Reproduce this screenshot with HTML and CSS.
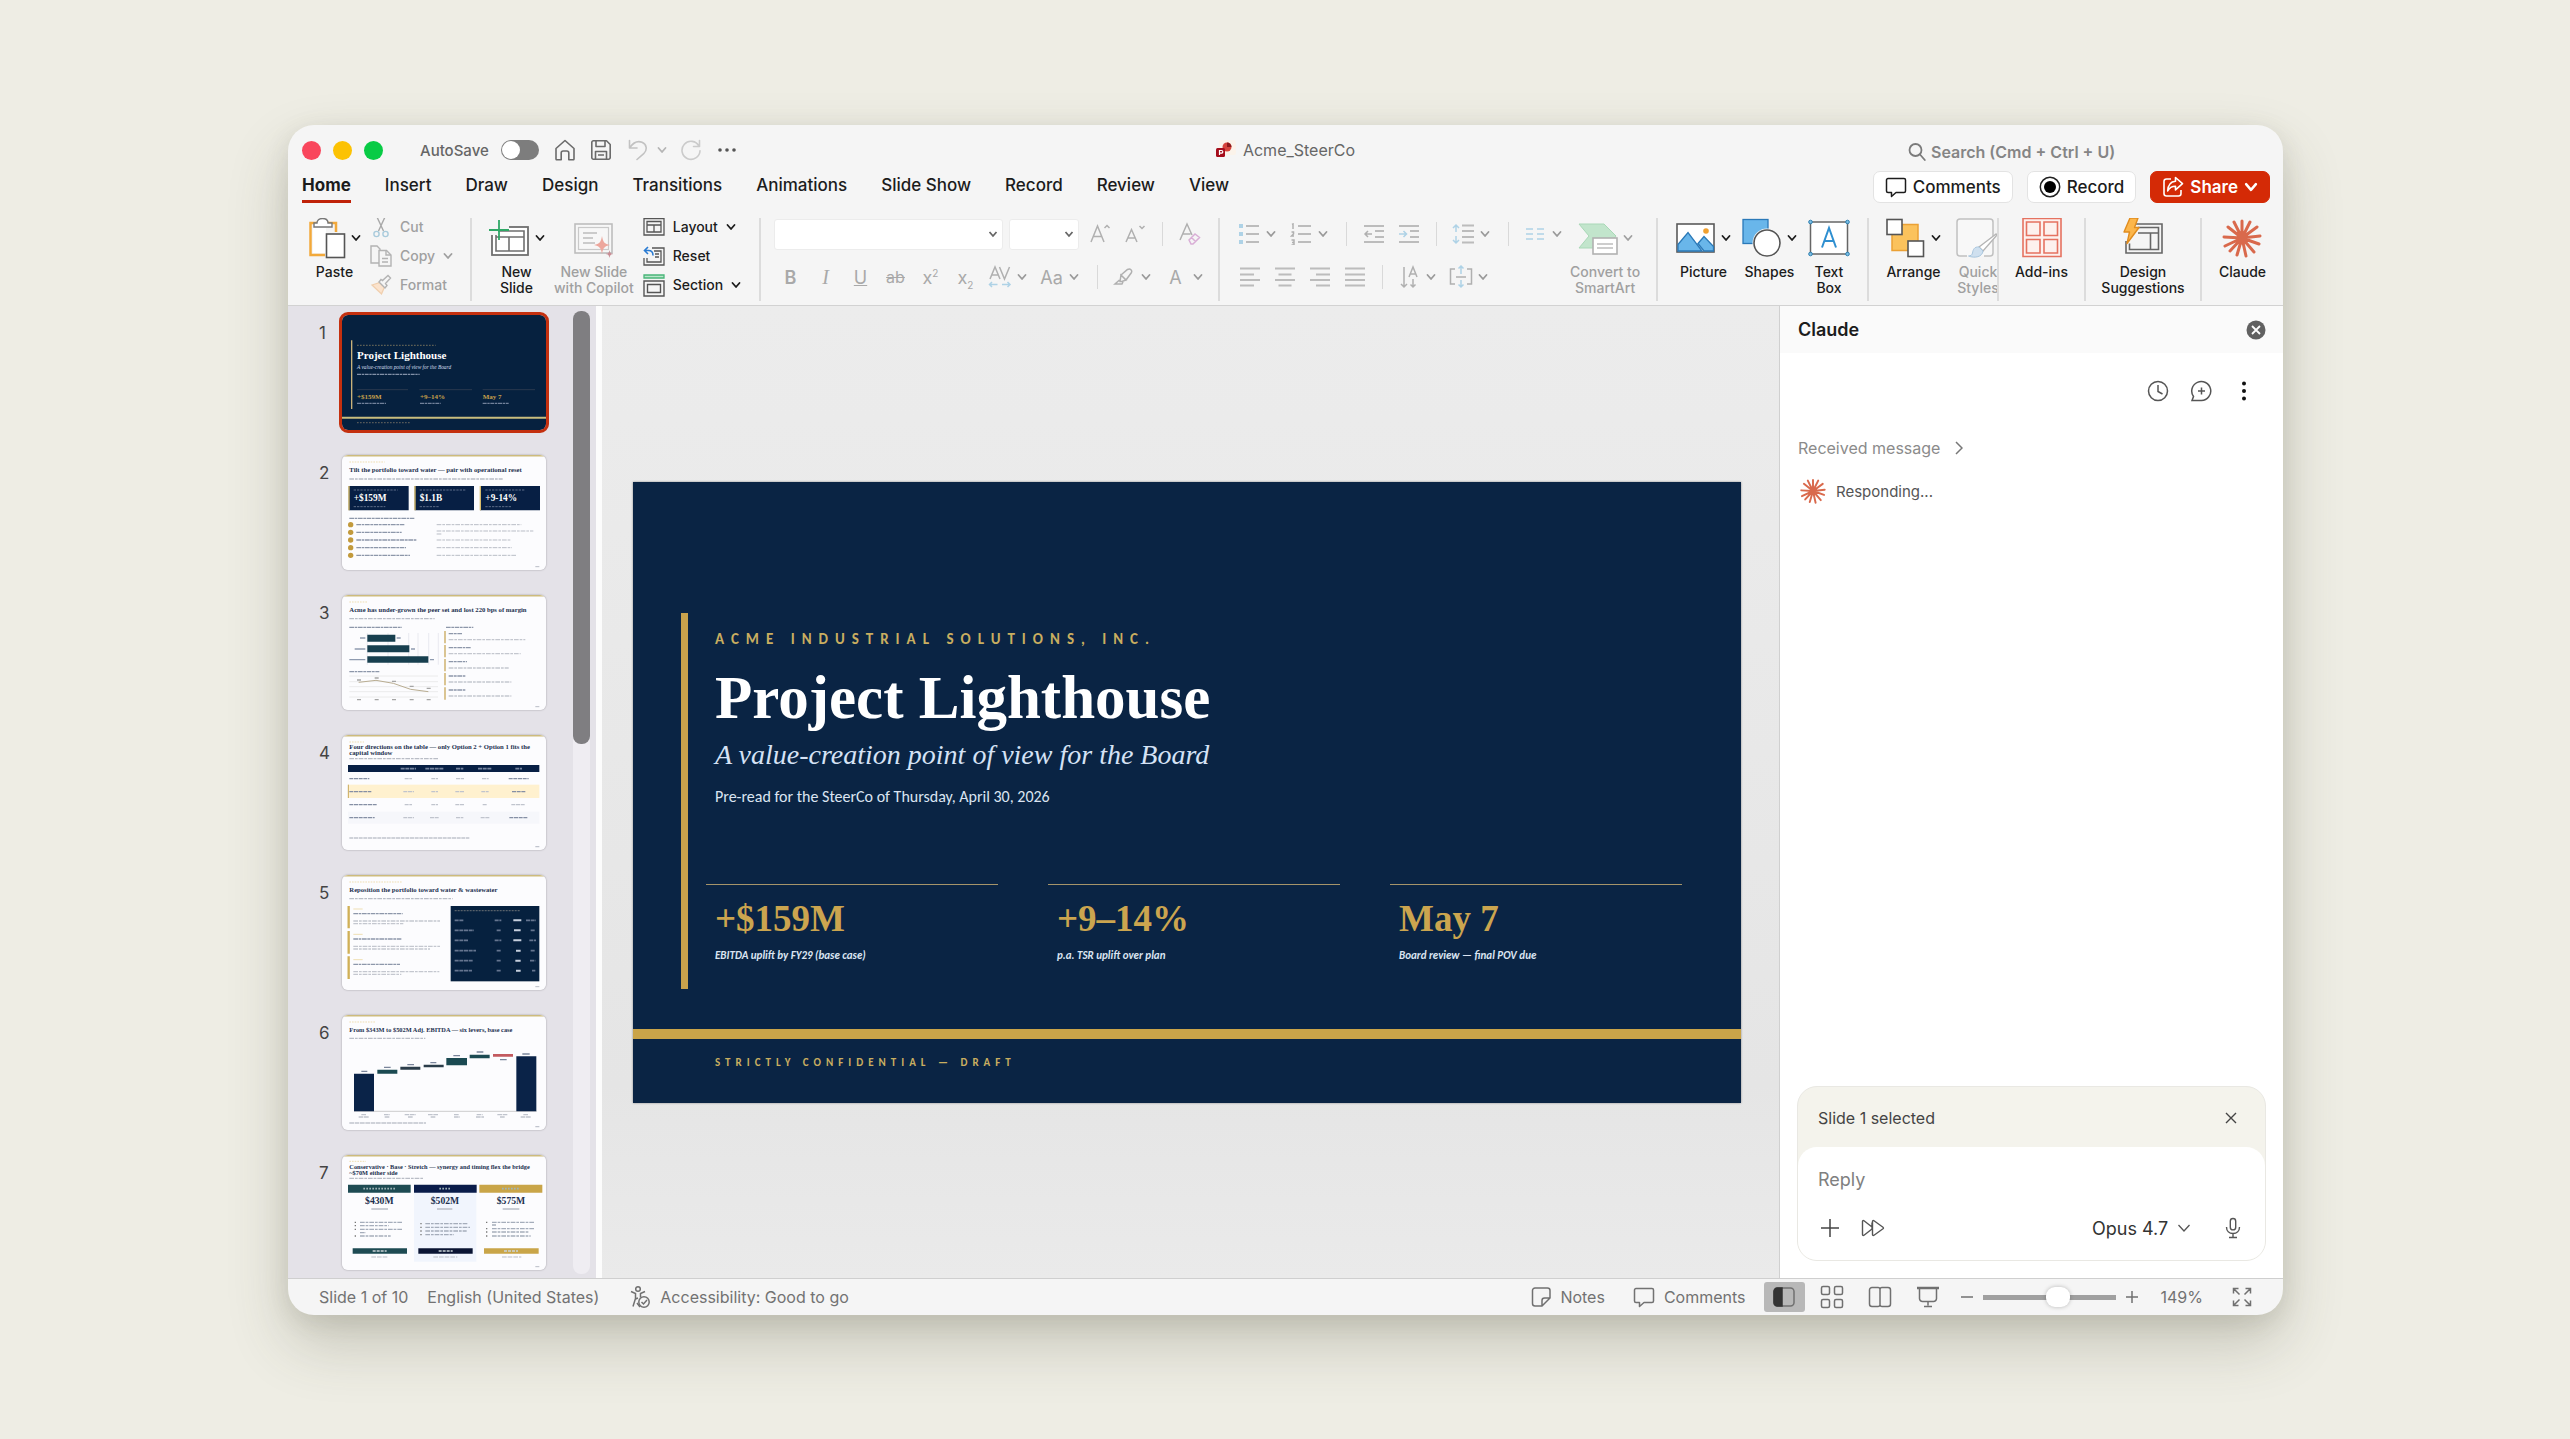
FILE: index.html
```html
<!DOCTYPE html>
<html lang="en">

<head>
  <meta charset="UTF-8" />
  <meta name="viewport" content="width=device-width, initial-scale=1" />
  <title>Acme_SteerCo</title>
  <link rel="stylesheet" href="styles.css">
</head>

<body>

  <!-- shared icons -->
  <svg class="sprite" aria-hidden="true">
    <symbol id="chev" viewBox="0 0 10 10"><path d="M1.500 3l3.500 4 3.500-4" fill="none" stroke="currentColor" stroke-width="1.800" stroke-linecap="round" stroke-linejoin="round" /></symbol>
    <symbol id="bubble" viewBox="0 0 22 22"><path d="M3 2.500h16a1.500 1.500 0 0 1 1.500 1.500v11a1.500 1.500 0 0 1-1.500 1.500H11l-4.500 4v-4H3A1.500 1.500 0 0 1 1.500 15V4A1.500 1.500 0 0 1 3 2.500z" fill="none" stroke="currentColor" stroke-width="1.500" stroke-linejoin="round" /></symbol>
    <symbol id="spark" viewBox="0 0 40 40">
      <g stroke="#d9694c" stroke-width="3" stroke-linecap="round">
        <path d="M20 20L20 3M20 20L28 4M20 20L35 9M20 20L38 18M20 20L37 26M20 20L32 34M20 20L24 38M20 20L15 37M20 20L8 33M20 20L3 28M20 20L2 19M20 20L6 9M20 20L12 4" />
      </g>
    </symbol>
  </svg>

  <div class="window">

    <header class="titlebar">
      <div class="title-left">
        <div class="lights"><i class="red"></i><i class="yellow"></i><i class="green"></i></div>
        <label class="autosave">AutoSave <input type="checkbox" class="toggle"></label>
        <button class="icon-btn home" aria-label="Home"><svg width="22" height="22" viewBox="0 0 22 22"><path d="M2 9.500L11 1.500l9 8V20a.8.8 0 0 1-.8.8h-4.400V14a2 2 0 0 0-2-2h-3.600a2 2 0 0 0-2 2v6.800H2.800A.8.8 0 0 1 2 20z" fill="none" stroke="#6b6b6b" stroke-width="1.600" stroke-linejoin="round" /></svg></button>
        <button class="icon-btn save" aria-label="Save"><svg width="22" height="22" viewBox="0 0 22 22"><path d="M3.500 1.800h13l3.700 3.700v13a1.700 1.700 0 0 1-1.700 1.700h-15a1.700 1.700 0 0 1-1.700-1.700v-15a1.700 1.700 0 0 1 1.700-1.700zM6 2v5.500h9V2M5.500 20v-7.500h11V20M8 16h6" fill="none" stroke="#6b6b6b" stroke-width="1.600" stroke-linejoin="round" /></svg></button>
        <button class="icon-btn undo" aria-label="Undo"><svg width="20" height="22" viewBox="0 0 20 22"><path d="M1.500 1.500v7.500h7.500M1.800 8.600C5 4 9.500 1.500 14 3.300c5 2.200 5.400 7.500 2 11L9 20.500" fill="none" stroke="#c2c2c2" stroke-width="1.600" stroke-linecap="round" stroke-linejoin="round" /></svg></button>
        <button class="icon-btn undo-more" aria-label="Undo history"><svg width="10" height="10"><use href="#chev" /></svg></button>
        <button class="icon-btn redo" aria-label="Redo"><svg width="22" height="22" viewBox="0 0 22 22"><path d="M19.500 1.500v6h-6M19 7.200a9 9 0 1 0 1 4.500" fill="none" stroke="#cbcbcb" stroke-width="1.600" stroke-linecap="round" stroke-linejoin="round" /></svg></button>
        <button class="icon-btn more" aria-label="More"><svg width="20" height="6" viewBox="0 0 20 6"><g fill="#555"><circle cx="3" cy="3" r="1.800" /><circle cx="10" cy="3" r="1.800" /><circle cx="17" cy="3" r="1.800" /></g></svg></button>
      </div>
      <div class="doc-name">
        <svg width="20" height="20" viewBox="0 0 20 20"><rect x="3" y="0" width="17" height="15" rx="2" fill="#fbf3ea" /><circle cx="11" cy="7" r="4.500" fill="#d6443a" /><path d="M11 7V2.500A4.500 4.500 0 0 1 15.500 7z" fill="#8e1a1a" /><rect x="0" y="8" width="9" height="9" rx="1.500" fill="#a50d1c" /><path d="M3.500 15v-4.500h2a1.300 1.300 0 0 1 0 2.600h-2" fill="none" stroke="#fff" stroke-width="1.200" /></svg>
        <span>Acme_SteerCo</span>
      </div>
      <label class="search">
        <svg width="18" height="20" viewBox="0 0 18 20"><circle cx="7.500" cy="8" r="6" fill="none" stroke="#7b7b7b" stroke-width="1.800" /><path d="M12 12.500l4.800 5.500" stroke="#7b7b7b" stroke-width="1.800" stroke-linecap="round" /></svg>
        <input type="search" placeholder="Search (Cmd + Ctrl + U)" aria-label="Search">
      </label>
    </header>

    <div class="tabrow">
      <nav class="tabs">
        <a href="#" class="active">Home</a>
        <a href="#">Insert</a>
        <a href="#">Draw</a>
        <a href="#">Design</a>
        <a href="#">Transitions</a>
        <a href="#">Animations</a>
        <a href="#">Slide Show</a>
        <a href="#">Record</a>
        <a href="#">Review</a>
        <a href="#">View</a>
      </nav>
      <div class="actions">
        <button class="pill"><svg width="22" height="22"><use href="#bubble" /></svg>Comments</button>
        <button class="pill"><svg width="22" height="22" viewBox="0 0 22 22"><circle cx="11" cy="11" r="9.700" fill="none" stroke="#222" stroke-width="1.500" /><circle cx="11" cy="11" r="6" fill="#000" /></svg>Record</button>
        <button class="pill share"><svg width="22" height="22" viewBox="0 0 22 22"><path d="M9 3H4.500A2.500 2.500 0 0 0 2 5.500v12A2.500 2.500 0 0 0 4.500 20h12a2.500 2.500 0 0 0 2.500-2.500V14M13.500 1.500l7 6.200-7 6.200v-3.600c-4 0-6 1.200-7.800 4.700C6 9 9 5.500 13.500 5.200z" fill="none" stroke="#fff" stroke-width="1.600" stroke-linejoin="round" /></svg>Share<svg class="chev" width="14" height="14"><use href="#chev" /></svg></button>
      </div>
    </div>

    <div class="ribbon">
      <section class="group clipboard">
        <button class="big">
          <span class="pic"><svg width="38" height="42" viewBox="0 0 38 42"><path d="M17 38H2.500V6H28v9" fill="none" stroke="#f2a93b" stroke-width="2.500" /><path d="M6 10V6h3c0-2.500 2-4.500 5.500-4.500S20 3.500 20 6h4v4z" fill="#fff" stroke="#777" stroke-width="1.400" /><rect x="5" y="11" width="13" height="25" fill="#fff" /><rect x="18.500" y="17" width="18" height="23.500" fill="#fff" stroke="#555" stroke-width="1.600" /></svg><svg class="chev"><use href="#chev" /></svg></span>
          <span>Paste</span>
        </button>
        <div class="stack off">
          <button><svg width="22" height="22" viewBox="0 0 22 22"><g fill="none" stroke-width="1.400"><path d="M7 1l6.500 14M15 1L8.500 15" stroke="#a8a8a8" /><circle cx="6.500" cy="18" r="2.600" stroke="#a9cbdc" /><circle cx="15.500" cy="18" r="2.600" stroke="#a9cbdc" /></g></svg>Cut</button>
          <button><svg width="22" height="22" viewBox="0 0 22 22"><g fill="#f5f5f5" stroke="#b3b3b3" stroke-width="1.400"><path d="M1 1h6l3 3v14H1z" /><path d="M9 5.500h7.500l4.500 4.500v11H9z" /><path d="M16 5.500V10h5M12 13.500h6M12 17h6" fill="none" /></g></svg>Copy<svg class="chev"><use href="#chev" /></svg></button>
          <button><svg width="22" height="22" viewBox="0 0 22 22"><path d="M2 11l8-2.500 4.500 4.500-3 7z" fill="#fbe3cd" stroke="#f0cfae" stroke-width="1.300" /><path d="M9 8l6 6 2-2.500-1.500-2L20.500 4 18 1.500l-5.500 5-1.500-1z" fill="#f5f5f5" stroke="#b3b3b3" stroke-width="1.400" /></svg>Format</button>
        </div>
      </section>

      <section class="group slides">
        <button class="big">
          <span class="pic"><svg width="42" height="40" viewBox="0 0 42 40"><rect x="4" y="9" width="36" height="28" fill="#fff" stroke="#6f6f6f" stroke-width="1.800" /><path d="M8 13h28v20H8zM8 19h28M21 19v14" fill="none" stroke="#6f6f6f" stroke-width="1.600" /><path d="M0 4h10v13H0zM10 4h11v7H10z" fill="#f5f5f5" /><path d="M11 2v20M1 12h20" stroke="#2fa866" stroke-width="1.800" /></svg><svg class="chev"><use href="#chev" /></svg></span>
          <span>New<br>Slide</span>
        </button>
        <button class="big off copilot">
          <span class="pic"><svg width="40" height="40" viewBox="0 0 40 40"><rect x="1" y="6" width="37" height="29" fill="#f7f7f7" stroke="#bdbdbd" stroke-width="1.600" /><rect x="4.500" y="9.500" width="30" height="22" fill="none" stroke="#c9c9c9" stroke-width="1.200" /><path d="M9 15h14M9 20h10M9 25h12" stroke="#bdbdbd" stroke-width="1.400" /><path d="M28 18c1 6 2.500 8 8 9-5.500 1-7 3-8 9-1-6-2.500-8-8-9 5.500-1 7-3 8-9z" fill="#eda79d" /><path d="M35.500 32c.6 3 1.200 3.600 4 4-2.800.4-3.400 1-4 4-.6-3-1.200-3.600-4-4 2.800-.4 3.400-1 4-4z" fill="#c98f96" /></svg></span>
          <span>New Slide<br>with Copilot</span>
        </button>
        <div class="stack">
          <button><svg width="22" height="20" viewBox="0 0 22 20"><path d="M1 1.500h20v16.500H1zM4 4.500h14v10.500H4zM4 8h14M11 8v7" fill="none" stroke="#555" stroke-width="1.300" /></svg>Layout<svg class="chev"><use href="#chev" /></svg></button>
          <button><svg width="22" height="20" viewBox="0 0 22 20"><path d="M9 2h12v17H1v-7M11 5h7v11H4v-4M12 8h4M12 11h4" fill="none" stroke="#555" stroke-width="1.300" /><path d="M5 1L1.500 4.500 5 8M2 4.500h3.500c3 0 4.500 2 4.500 5" fill="none" stroke="#2b7cd3" stroke-width="1.600" /></svg>Reset</button>
          <button><svg width="22" height="24" viewBox="0 0 22 24"><path d="M1 2h20v3H1z" fill="#b9e6cb" stroke="#48b578" stroke-width="1.300" /><path d="M1 8h20v15H1zM4.500 11.500h13v8h-13z" fill="none" stroke="#555" stroke-width="1.400" /></svg>Section<svg class="chev"><use href="#chev" /></svg></button>
        </div>
      </section>

      <section class="group rows font">
        <div class="row">
          <select class="combo face" aria-label="Font"><option></option></select>
          <select class="combo size" aria-label="Font size"><option></option></select>
          <button class="tool" aria-label="Grow font"><svg width="22" height="22" viewBox="0 0 22 22"><path d="M2 19L8.500 3 15 19M4.500 13.500h8M15.500 5L18 2.500 20.500 5" /></svg></button>
          <button class="tool" aria-label="Shrink font"><svg width="22" height="22" viewBox="0 0 22 22"><path d="M2 19L7.500 6.500 13 19M4 15h7M15.500 3L18 5.500 20.500 3" /></svg></button>
          <i class="sep"></i>
          <button class="tool" aria-label="Clear formatting"><svg width="24" height="24" viewBox="0 0 24 24"><path d="M2 18L9 2l5 11M4.500 12h8" /><path class="pink" d="M11 18l6-6 4.500 3.500-6.500 6.500h-2zM13.500 15.500l4 4" /></svg></button>
        </div>
        <div class="row">
          <button class="tool"><b>B</b></button>
          <button class="tool"><em>I</em></button>
          <button class="tool"><u>U</u></button>
          <button class="tool"><s>ab</s></button>
          <button class="tool"><span>x<sup>2</sup></span></button>
          <button class="tool"><span>x<sub>2</sub></span></button>
          <button class="tool dd" aria-label="Character spacing"><svg width="24" height="24" viewBox="0 0 24 24"><path d="M2 14L7 2l5 12M4 10h6M11.500 2l5 12 5-12" /><path class="blue" d="M1.500 19.500h8M4 17l-2.500 2.500L4 22M22 19.500h-8M19.500 17l2.500 2.500-2.500 2.500" /></svg><svg class="chev"><use href="#chev" /></svg></button>
          <button class="tool dd"><span>Aa</span><svg class="chev"><use href="#chev" /></svg></button>
          <i class="sep"></i>
          <button class="tool dd" aria-label="Highlight"><svg width="22" height="22" viewBox="0 0 22 22"><path d="M8 9L14.500 3.500c3-1.500 5 1 4 3L13 14zM8 9l5 5-4 1.500H7zM6.500 14L2 18h7l1-2" /></svg><svg class="chev"><use href="#chev" /></svg></button>
          <button class="tool dd"><span>A</span><svg class="chev"><use href="#chev" /></svg></button>
        </div>
      </section>

      <section class="group paragraph">
        <div class="rows">
          <div class="row">
            <button class="tool dd" aria-label="Bullets"><svg width="22" height="22" viewBox="0 0 22 22"><path class="gray" d="M8 3h13M8 11h13M8 19h13" /><path class="blue dots" d="M1 3h4M1 11h4M1 19h4" /></svg><svg class="chev"><use href="#chev" /></svg></button>
            <button class="tool dd" aria-label="Numbering"><svg width="22" height="22" viewBox="0 0 22 22"><path class="gray" d="M8 3h13M8 11h13M8 19h13" /><path d="M2 1.500l1-.5v5M1.500 9h2v2l-2 2h2.500M1.500 17h2.500v5H1.500M2 19.500h2" /></svg><svg class="chev"><use href="#chev" /></svg></button>
            <i class="sep"></i>
            <button class="tool" aria-label="Decrease indent"><svg width="22" height="22" viewBox="0 0 22 22"><path class="gray" d="M1 3h20M12 8h9M12 14h9M1 19h20" /><path d="M9 11H2M5 8l-3 3 3 3" /></svg></button>
            <button class="tool" aria-label="Increase indent"><svg width="22" height="22" viewBox="0 0 22 22"><path class="gray" d="M1 3h20M12 8h9M12 14h9M1 19h20" /><path class="blue" d="M1 11h7M5.500 8l3 3-3 3" /></svg></button>
            <i class="sep"></i>
            <button class="tool dd" aria-label="Line spacing"><svg width="24" height="22" viewBox="0 0 24 22"><path class="gray" d="M11 2.500h12M11 8h12M11 14h12M11 19.500h12" /><path class="blue" d="M5 9V2M2 5l3-3 3 3M5 13v7M2 17l3 3 3-3" /></svg><svg class="chev"><use href="#chev" /></svg></button>
            <i class="sep"></i>
            <button class="tool dd" aria-label="Columns"><svg width="20" height="22" viewBox="0 0 20 22"><path class="blue" d="M1 6h7M1 11h7M1 16h7M12 6h7M12 11h7M12 16h7" /></svg><svg class="chev"><use href="#chev" /></svg></button>
          </div>
          <div class="row">
            <button class="tool" aria-label="Align left"><svg width="22" height="22" viewBox="0 0 22 22"><path class="gray" d="M1 2.500h20M1 8.500h14M1 14h20M1 19.500h14" /></svg></button>
            <button class="tool" aria-label="Center"><svg width="22" height="22" viewBox="0 0 22 22"><path class="gray" d="M1 2.500h20M4.500 8.500h13M1 14h20M4.500 19.500h13" /></svg></button>
            <button class="tool" aria-label="Align right"><svg width="22" height="22" viewBox="0 0 22 22"><path class="gray" d="M1 2.500h20M7 8.500h14M1 14h20M7 19.500h14" /></svg></button>
            <button class="tool" aria-label="Justify"><svg width="22" height="22" viewBox="0 0 22 22"><path class="gray" d="M1 2.500h20M1 8.500h20M1 14h20M1 19.500h20" /></svg></button>
            <i class="sep"></i>
            <button class="tool dd" aria-label="Text direction"><svg width="20" height="24" viewBox="0 0 20 24"><path d="M5 2v20M2 19l3 3 3-3M10 12l4-10 4 10M11.500 9h5M14 14v8M11.500 19.500L14 22l2.500-2.500" /></svg><svg class="chev"><use href="#chev" /></svg></button>
            <button class="tool dd" aria-label="Align text"><svg width="24" height="24" viewBox="0 0 24 24"><path d="M6 4H1.500v15H6M18 4h4.500v15H18M7 12h10" /><path class="blue" d="M12 9V1M9.500 3.500L12 1l2.500 2.500M12 15v7M9.500 19.500L12 22l2.500-2.500" /></svg><svg class="chev"><use href="#chev" /></svg></button>
          </div>
        </div>
        <button class="big off smartart">
          <span class="pic"><svg width="40" height="40" viewBox="0 0 40 40"><path d="M1 6h25l12 12-9 12H1l10-12z" fill="#c2e5cc" stroke="#a9d8b7" /><rect x="15" y="20" width="24" height="16" fill="#fff" stroke="#b1b1b1" stroke-width="1.600" /><path d="M19 26h16M19 30h16" stroke="#bdbdbd" stroke-width="1.300" /></svg><svg class="chev"><use href="#chev" /></svg></span>
          <span>Convert to<br>SmartArt</span>
        </button>
      </section>

      <section class="group insert">
        <button class="big">
          <span class="pic"><svg width="40" height="40" viewBox="0 0 40 40"><rect x="1" y="6" width="37" height="28" fill="#fff" stroke="#5a5a5a" stroke-width="1.600" /><path d="M2 26.500l10-12L26 33H2zM22 25.500l6-7 9.500 10V33H28z" fill="#69b6ea" stroke="#2a79b8" stroke-width="1.300" /><circle cx="30" cy="13" r="2.800" fill="#f0a030" /></svg><svg class="chev"><use href="#chev" /></svg></span>
          <span>Picture</span>
        </button>
        <button class="big">
          <span class="pic"><svg width="40" height="40" viewBox="0 0 40 40"><rect x="1" y="1.500" width="25" height="24" fill="#69b6ea" stroke="#2a79b8" stroke-width="1.300" /><circle cx="25" cy="25" r="14.500" fill="#f5f5f5" /><circle cx="25" cy="25" r="13" fill="#fff" stroke="#555" stroke-width="1.600" /></svg><svg class="chev"><use href="#chev" /></svg></span>
          <span>Shapes</span>
        </button>
        <button class="big">
          <span class="pic"><svg width="42" height="40" viewBox="0 0 42 40"><rect x="2.500" y="4" width="37" height="32" fill="#fff" stroke="#666" stroke-width="1.500" /><path d="M14 29.500L21 10l7 19.500M16.500 23h9" fill="none" stroke="#2f8fd0" stroke-width="2" /><g fill="#7cc0e6" stroke="#2f7fb0"><circle cx="2.500" cy="4" r="1.800" /><circle cx="39.500" cy="4" r="1.800" /><circle cx="2.500" cy="36" r="1.800" /><circle cx="39.500" cy="36" r="1.800" /></g></svg></span>
          <span>Text<br>Box</span>
        </button>
      </section>

      <section class="group arrange">
        <button class="big">
          <span class="pic"><svg width="40" height="40" viewBox="0 0 40 40"><rect x="6" y="6.500" width="26" height="26" fill="#fbc25c" stroke="#eba134" stroke-width="1.500" /><rect x="1" y="1.500" width="15" height="15" fill="#fff" stroke="#555" stroke-width="1.600" /><rect x="22" y="23" width="15.500" height="15.500" fill="#fff" stroke="#555" stroke-width="1.600" /></svg><svg class="chev"><use href="#chev" /></svg></span>
          <span>Arrange</span>
        </button>
        <button class="big off quick">
          <span class="pic"><svg width="46" height="42" viewBox="0 0 46 42"><path d="M12 39H5a3 3 0 0 1-3-3V5a3 3 0 0 1 3-3h30a3 3 0 0 1 3 3v31a3 3 0 0 1-3 3h-6" fill="#f8f8f8" stroke="#c0c0c0" stroke-width="1.500" /><path d="M41 17L24 30l4 4 14-16z" fill="#fff" stroke="#b5b5b5" stroke-width="1.400" /><path d="M24 30c-5-.500-6 3-6.500 6-.3 2-2 3-4 3 6 2.500 14 1 14.500-5z" fill="#cfe0ef" stroke="#a9c6de" /></svg></span>
          <span>Quick<br>Styles</span>
        </button>
      </section>

      <section class="group addins">
        <button class="big">
          <span class="pic"><svg width="42" height="42" viewBox="0 0 42 42"><path d="M2 1.500h38v38H2zM5.500 5h13.500v13.500H5.500zM23 5h13.500v13.500H23zM5.500 22.500h13.500V36H5.500zM23 22.500h13.500V36H23z" fill="#fdf1ee" stroke="#e57260" stroke-width="1.600" /></svg></span>
          <span>Add-ins</span>
        </button>
      </section>

      <section class="group designer">
        <button class="big">
          <span class="pic"><svg width="42" height="42" viewBox="0 0 42 42"><path d="M13 7h27v29H4V24M16 10.500h20.500v22H7.500v-6M16 16h20.500M28.500 16v16.500" fill="none" stroke="#666" stroke-width="1.600" /><path d="M8 1h8l-3.500 9.500H17L5 26.500l2.500-11.500H2z" fill="#fcb64b" stroke="#e08c1e" stroke-width="1.400" stroke-linejoin="round" /></svg></span>
          <span>Design<br>Suggestions</span>
        </button>
      </section>

      <section class="group claude">
        <button class="big">
          <span class="pic"><svg width="40" height="40"><use href="#spark" /></svg></span>
          <span>Claude</span>
        </button>
      </section>
    </div>

    <main class="workspace">
      <aside class="thumbs">
        <ol>
          <li>
            <span>1</span>
            <svg class="thumb selected" viewBox="0 0 612 345">
              <rect width="612" height="345" fill="#06213f" />
              <path d="M29 76v206" stroke="#c9b27a" stroke-width="4" />
              <path d="M45 91h236" stroke="#5c5f55" stroke-width="4" stroke-dasharray="5 4" />
              <text x="45" y="133" font-size="33" fill="#fff">Project Lighthouse</text>
              <text x="45" y="161" class="it" font-size="16" fill="#d3dcec">A value-creation point of view for the Board</text>
              <path d="M45 178h188" stroke="#8291a8" stroke-width="4" stroke-dasharray="12 2 7 2" />
              <path d="M45 224h153M232 224h158M422 224h157" stroke="#3c4654" stroke-width="2" />
              <g fill="#c9a24b" font-size="21"><text x="45" y="252">+$159M</text><text x="234" y="252">+9–14%</text><text x="422" y="252">May 7</text></g>
              <path d="M45 265h87M234 265h62M422 265h78" stroke="#71819a" stroke-width="4" stroke-dasharray="12 2 7 2" />
              <path d="M0 308h612" stroke="#c8bd7e" stroke-width="6" />
              <path d="M45 323h162" stroke="#55595a" stroke-width="4" stroke-dasharray="5 4" />
            </svg>
          </li>
          <li>
            <span>2</span>
            <svg class="thumb" viewBox="0 0 612 345">
              <rect width="612" height="345" fill="#fcfcfe" />
              <path d="M0 2h612" stroke="#cdbb7c" stroke-width="5" />
              <path d="M22 21h106" stroke="#efdfb4" stroke-width="3" stroke-dasharray="5 3" />
              <text x="22" y="52" font-size="20">Tilt the portfolio toward water — pair with operational reset</text>
              <path d="M22 72h460" stroke="#b9bdc6" stroke-width="4" stroke-dasharray="14 3 8 3" />
              <path d="M20 93h180v73H20zM218 93h178v73H218zM414 93h180v73H414z" fill="#071f44" />
              <path d="M21 93v73M219 93v73M415 93v73" stroke="#d9bd6a" stroke-width="4" />
              <path d="M35 105h132M233 105h140M430 105h120M35 155h95M233 155h60M430 155h80" stroke="#5c6c88" stroke-width="3" stroke-dasharray="7 3" />
              <g fill="#fff" font-size="28"><text x="35" y="139">+$159M</text><text x="233" y="139">$1.1B</text><text x="430" y="139">+9-14%</text></g>
              <path d="M22 190h195" stroke="#8d97aa" stroke-width="4" stroke-dasharray="14 2 8 2" />
              <g fill="#c29a3c"><circle cx="26" cy="209" r="8" /><circle cx="26" cy="232" r="8" /><circle cx="26" cy="255" r="8" /><circle cx="26" cy="278" r="8" /><circle cx="26" cy="301" r="8" /></g>
              <path d="M43 209h144M43 232h136M43 255h180M43 278h149M43 301h161" stroke="#8d97aa" stroke-width="4" stroke-dasharray="14 2 8 2" />
              <path d="M284 209h254M284 228h290M284 237h14M284 255h221M284 278h226M284 301h240" stroke="#b9bdc6" stroke-width="3" stroke-dasharray="14 3 8 3" />
              <path d="M580 335h12" stroke="#b9bdc6" stroke-width="3" />
            </svg>
          </li>
          <li>
            <span>3</span>
            <svg class="thumb" viewBox="0 0 612 345">
              <rect width="612" height="345" fill="#fcfcfe" />
              <path d="M0 2h612" stroke="#cdbb7c" stroke-width="5" />
              <path d="M22 21h56" stroke="#efdfb4" stroke-width="3" stroke-dasharray="5 3" />
              <text x="22" y="52" font-size="20">Acme has under-grown the peer set and lost 220 bps of margin</text>
              <path d="M22 71h256" stroke="#b9bdc6" stroke-width="4" stroke-dasharray="14 3 8 3" />
              <path d="M22 97h158M312 97h82M22 230h90" stroke="#8d97aa" stroke-width="4" stroke-dasharray="14 2 8 2" />
              <path d="M76 114v95M138 114v95M200 114v95M228 114v95M260 114v95M289 114v95" stroke="#dfe1ea" stroke-width="2" />
              <path d="M76 119h84v21H76zM76 151h126v21H76zM76 184h183v19H76z" fill="#173f4f" />
              <path d="M54 129h16M38 162h32M22 194h48M164 129h12M207 162h12M264 194h12" stroke="#8f9bb0" stroke-width="4" />
              <path d="M22 243h266M22 260h266M22 275h266M22 290h266M22 306h266" stroke="#e2e2e2" stroke-width="2" />
              <path d="M50 262l52-6 52 9 52 18 53 7" fill="none" stroke="#b9ad92" stroke-width="3" />
              <path d="M45 255h12M98 249h12M150 259h12M203 274h12M254 280h12M45 314h12M98 314h12M150 314h12M203 314h12M254 314h12" stroke="#a5a5a5" stroke-width="4" />
              <path d="M309 108v37M309 150v37M309 192v37M309 234v37M309 277v37" stroke="#c9a95c" stroke-width="4" />
              <path d="M320 116h40M320 158h66M320 200h55M320 243h50M320 285h52" stroke="#8d97aa" stroke-width="4" stroke-dasharray="14 2 8 2" />
              <path d="M320 134h230M320 176h216M320 219h180M320 261h188M320 303h188" stroke="#c4c7cf" stroke-width="4" stroke-dasharray="14 3 8 3" />
              <path d="M580 335h12" stroke="#b9bdc6" stroke-width="3" />
            </svg>
          </li>
          <li>
            <span>4</span>
            <svg class="thumb" viewBox="0 0 612 345">
              <rect width="612" height="345" fill="#fcfcfe" />
              <path d="M0 2h612" stroke="#cdbb7c" stroke-width="5" />
              <path d="M22 21h44" stroke="#efdfb4" stroke-width="3" stroke-dasharray="5 3" />
              <text x="22" y="42" font-size="20">Four directions on the table — only Option 2 + Option 1 fits the</text>
              <text x="22" y="61" font-size="20">capital window</text>
              <path d="M22 71h268" stroke="#b9bdc6" stroke-width="4" stroke-dasharray="14 3 8 3" />
              <rect x="18" y="90" width="574" height="21" fill="#071f44" />
              <path d="M176 101h46M250 101h54M342 101h22M408 101h42M520 101h20" stroke="#7685a0" stroke-width="5" stroke-dasharray="12 2" />
              <rect x="18" y="149" width="574" height="40" fill="#fff1cf" /><path d="M19 149v40" stroke="#c9a95c" stroke-width="3" />
              <rect x="18" y="230" width="574" height="36" fill="#f6f7fb" />
              <path d="M22 131h60M22 170h66M22 209h82M22 248h76M500 131h60M510 170h40M502 248h56" stroke="#858fa4" stroke-width="4" stroke-dasharray="12 2" />
              <path d="M188 131h22M268 131h20M342 131h24M420 131h20M184 170h32M268 170h20M340 170h28M418 170h22M188 209h22M268 209h20M340 209h26M422 209h12M184 248h32M264 248h26M342 248h22M416 248h26M508 209h42M22 309h360M580 335h12" stroke="#c0c4cd" stroke-width="4" stroke-dasharray="12 2" />
            </svg>
          </li>
          <li>
            <span>5</span>
            <svg class="thumb" viewBox="0 0 612 345">
              <rect width="612" height="345" fill="#fcfcfe" />
              <path d="M0 2h612" stroke="#cdbb7c" stroke-width="5" />
              <path d="M22 21h160" stroke="#efdfb4" stroke-width="3" stroke-dasharray="5 3" />
              <text x="22" y="51" font-size="20">Reposition the portfolio toward water &amp; wastewater</text>
              <path d="M22 71h310" stroke="#b9bdc6" stroke-width="4" stroke-dasharray="14 3 8 3" />
              <path d="M20 93v67M20 168v68M20 244v68" stroke="#d0b057" stroke-width="7" />
              <path d="M34 116h148M34 192h146M34 268h140" stroke="#8d97aa" stroke-width="4" stroke-dasharray="14 2 8 2" />
              <path d="M34 138h260M34 146h150M34 214h260M34 222h230M34 290h258M34 298h144" stroke="#c4c7cf" stroke-width="4" stroke-dasharray="14 3 8 3" />
              <path d="M34 102h28M34 178h28M34 254h28" stroke="#efdfb4" stroke-width="3" />
              <rect x="326" y="93" width="266" height="226" fill="#06213f" />
              <path d="M338 107h195" stroke="#57616a" stroke-width="4" stroke-dasharray="6 3" />
              <path d="M338 136h26M338 166h58M338 196h40M338 227h64M338 257h56M338 287h52M458 136h20M464 166h14M458 196h20M464 227h14M464 257h14M464 287h14M552 136h30M566 166h14M562 196h20M566 227h14M564 257h16M570 287h10" stroke="#65758f" stroke-width="5" stroke-dasharray="12 2" />
              <path d="M514 136h24M516 166h20M514 196h24M522 227h14M520 257h16M522 287h14" stroke="#c6cfdd" stroke-width="6" />
              <path d="M580 335h12" stroke="#b9bdc6" stroke-width="3" />
            </svg>
          </li>
          <li>
            <span>6</span>
            <svg class="thumb" viewBox="0 0 612 345">
              <rect width="612" height="345" fill="#fcfcfe" />
              <path d="M0 2h612" stroke="#cdbb7c" stroke-width="5" />
              <path d="M22 21h80" stroke="#efdfb4" stroke-width="3" stroke-dasharray="5 3" />
              <text x="22" y="51" font-size="19">From $343M to $502M Adj. EBITDA — six levers, base case</text>
              <path d="M22 70h228" stroke="#b9bdc6" stroke-width="4" stroke-dasharray="14 3 8 3" />
              <path d="M36 289h548" stroke="#b5b5b5" stroke-width="2" />
              <path d="M36 176h60v113H36zM523 124h60v165H523z" fill="#0a2348" />
              <path d="M106 164h60v12h-60zM313 129h62v22h-62zM383 119h60v11h-60z" fill="#1b4a52" />
              <path d="M175 155h60v9h-60zM245 149h60v8h-60z" fill="#2b3d4a" />
              <path d="M453 117h60v8h-60z" fill="#c35a5f" />
              <path d="M58 169h18M126 157h20M196 149h20M265 143h18M334 122h20M404 111h20M474 134h20M541 117h22" stroke="#7a859b" stroke-width="4" />
              <path d="M58 299h16M126 299h18M188 299h34M258 299h32M336 299h16M404 299h18M466 299h32M544 299h16M50 306h30M128 306h16M198 306h16M266 306h16M336 306h18M402 306h24M474 306h14M536 306h30M22 324h230M580 335h12" stroke="#c0c4cd" stroke-width="4" stroke-dasharray="14 2" />
            </svg>
          </li>
          <li>
            <span>7</span>
            <svg class="thumb" viewBox="0 0 612 345">
              <rect width="612" height="345" fill="#fcfcfe" />
              <path d="M0 2h612" stroke="#cdbb7c" stroke-width="5" />
              <path d="M22 19h50" stroke="#efdfb4" stroke-width="3" stroke-dasharray="5 3" />
              <text x="22" y="41" font-size="19">Conservative · Base · Stretch — synergy and timing flex the bridge</text>
              <text x="22" y="60" font-size="19">~$70M either side</text>
              <path d="M22 70h224" stroke="#b9bdc6" stroke-width="4" stroke-dasharray="14 3 8 3" />
              <rect x="216" y="112" width="187" height="208" fill="#f1f5fd" />
              <path d="M18 89h188v24H18z" fill="#1e4b53" /><path d="M216 89h188v24H216z" fill="#0a1c4a" /><path d="M412 89h189v24H412z" fill="#c9a548" />
              <path d="M64 101h96M292 101h34M480 101h50" stroke="#9fb3b8" stroke-width="5" stroke-dasharray="5 4" />
              <g font-size="29" text-anchor="middle"><text x="112" y="146">$430M</text><text x="309" y="146">$502M</text><text x="507" y="146">$575M</text></g>
              <path d="M88 162h50M285 162h46M482 162h50" stroke="#b9bdc6" stroke-width="4" />
              <path d="M54 202h128M54 212h86M54 223h128M54 233h18M54 243h92M250 206h128M250 217h134M250 228h124M250 239h86M450 202h126M450 210h12M450 221h128M450 231h110M450 243h116" stroke="#a5adbb" stroke-width="4" stroke-dasharray="14 3 8 3" />
              <path d="M38 202h4M38 212h4M38 223h4M38 243h4M235 206h4M235 217h4M235 228h4M235 239h4M432 202h4M432 221h4M432 231h4M432 243h4" stroke="#777" stroke-width="4" />
              <path d="M32 280h163v16H32z" fill="#1e4b53" /><path d="M229 280h163v16H229z" fill="#0a1433" /><path d="M426 280h164v16H426z" fill="#c9a548" />
              <path d="M92 288h42M290 288h42M486 288h42" stroke="#c9d2d6" stroke-width="5" stroke-dasharray="9 3" />
              <path d="M88 306h50M274 306h72M480 306h58M580 335h12" stroke="#b9bdc6" stroke-width="3" stroke-dasharray="14 3" />
            </svg>
          </li>
        </ol>
        <div class="scroll"><div class="scroll-thumb"></div></div>
      </aside>

      <section class="editor">
        <article class="slide">
          <div class="hero">
            <p class="eyebrow">ACME INDUSTRIAL SOLUTIONS, INC.</p>
            <h1>Project Lighthouse</h1>
            <p class="subtitle">A value-creation point of view for the Board</p>
            <p class="preread">Pre-read for the SteerCo of Thursday, April 30, 2026</p>
            <div class="stats">
              <div><strong>+$159M</strong><em>EBITDA uplift by FY29 (base case)</em></div>
              <div><strong>+9–14%</strong><em>p.a. TSR uplift over plan</em></div>
              <div><strong>May 7</strong><em>Board review — final POV due</em></div>
            </div>
          </div>
          <div class="band"></div>
          <p class="confidential">STRICTLY CONFIDENTIAL — DRAFT</p>
        </article>
      </section>

      <aside class="pane">
        <header>
          <h2>Claude</h2>
          <button class="icon-btn" aria-label="Close pane"><svg width="20" height="20" viewBox="0 0 20 20"><circle cx="10" cy="10" r="9.500" fill="#616161" /><path d="M6 6l8 8M14 6l-8 8" stroke="#fff" stroke-width="1.800" /></svg></button>
        </header>
        <div class="pane-tools">
          <button class="icon-btn" aria-label="History"><svg width="22" height="22" viewBox="0 0 22 22"><circle cx="11" cy="11" r="9.500" /><path d="M11 5v6.500l4.500 2.500" /></svg></button>
          <button class="icon-btn" aria-label="New chat"><svg width="22" height="22" viewBox="0 0 22 22"><path d="M2 20.500l1.500-4A9.500 9.500 0 1 1 11.500 20.500zM11.500 7.500v7M8 11h7" /></svg></button>
          <button class="icon-btn" aria-label="Options"><svg class="solid" width="22" height="22" viewBox="0 0 22 22"><circle cx="11" cy="3.500" r="2" /><circle cx="11" cy="11" r="2" /><circle cx="11" cy="18.500" r="2" /></svg></button>
        </div>
        <button class="received">Received message <svg width="8" height="14" viewBox="0 0 8 14"><path d="M1 1l6 6-6 6" fill="none" stroke="#777" stroke-width="1.500" /></svg></button>
        <p class="responding"><svg width="26" height="26"><use href="#spark" /></svg>Responding...</p>

        <form class="composer">
          <div class="context">Slide 1 selected
            <button type="button" class="icon-btn" aria-label="Remove"><svg width="12" height="12" viewBox="0 0 12 12"><path d="M1 1l10 10M11 1L1 11" stroke="#444" stroke-width="1.400" /></svg></button>
          </div>
          <div class="box">
            <input type="text" placeholder="Reply" aria-label="Reply">
            <div class="box-tools">
              <button type="button" class="icon-btn" aria-label="Attach"><svg width="18" height="18" viewBox="0 0 18 18"><path d="M9 0v18M0 9h18" stroke="#444" stroke-width="1.500" /></svg></button>
              <button type="button" class="icon-btn ff" aria-label="Auto accept"><svg width="24" height="18" viewBox="0 0 24 18"><path d="M1.500 2.500v13c0 .800.800 1.200 1.500.700l8-6.200V3.500M1.500 2.500c0-.800.800-1.200 1.500-.700L11 8M11.500 2.500c0-.800.800-1.200 1.500-.700l9 6.400c.6.500.6 1.100 0 1.600l-9 6.400c-.7.500-1.500.1-1.500-.700z" fill="none" stroke="#555" stroke-width="1.400" stroke-linejoin="round" /></svg></button>
              <span class="model"><select aria-label="Model"><option>Opus 4.7</option></select><svg width="14" height="14" viewBox="0 0 14 14"><path d="M1.500 4L7 10l5.500-6" fill="none" stroke="#555" stroke-width="1.300" /></svg></span>
              <button type="button" class="icon-btn" aria-label="Dictate"><svg width="16" height="22" viewBox="0 0 16 22"><path d="M8 1.500A2.700 2.700 0 0 1 10.700 4.200v6a2.700 2.700 0 0 1-5.400 0v-6A2.700 2.700 0 0 1 8 1.500zM1.500 10c0 4 2.700 6.500 6.500 6.500s6.500-2.500 6.500-6.500M8 16.500V20M4 20.500h8" fill="none" stroke="#555" stroke-width="1.400" /></svg></button>
            </div>
          </div>
        </form>
      </aside>
    </main>

    <footer class="status">
      <span class="count">Slide 1 of 10</span>
      <span>English (United States)</span>
      <button class="a11y"><svg width="22" height="24" viewBox="0 0 22 24"><circle cx="9" cy="4" r="2.300" /><path d="M2 6.500l4.500 2v5L4 21.500M16 6.500l-4.500 2v4M6.500 14l2.500-1M11 22l-3-4" /><circle cx="15" cy="17" r="5.200" /><path d="M12.500 17l2 2 3.500-4" /></svg>Accessibility: Good to go</button>
      <button class="notes"><svg width="20" height="22" viewBox="0 0 20 22"><path d="M4 2h12.500A2.500 2.500 0 0 1 19 4.500V12l-8 8H4a2.500 2.500 0 0 1-2.500-2.500v-13A2.500 2.500 0 0 1 4 2zM11 20v-5.500a2.500 2.500 0 0 1 2.500-2.500H19" /></svg>Notes</button>
      <button class="remarks"><svg width="22" height="22"><use href="#bubble" /></svg>Comments</button>
      <div class="views">
        <button class="on" aria-label="Normal"><svg width="24" height="22" viewBox="0 0 24 22"><rect x="2" y="2" width="20" height="18" rx="3.500" /><path d="M10 2v18H5.500A3.500 3.500 0 0 1 2 16.500v-11A3.500 3.500 0 0 1 5.500 2z" fill="#333" stroke="#333" /></svg></button>
        <button aria-label="Slide sorter"><svg width="24" height="24" viewBox="0 0 24 24"><rect x="1.500" y="1.500" width="8" height="8" rx="1.500" /><rect x="14.500" y="1.500" width="8" height="8" rx="1.500" /><rect x="1.500" y="14.500" width="8" height="8" rx="1.500" /><rect x="14.500" y="14.500" width="8" height="8" rx="1.500" /></svg></button>
        <button aria-label="Reading view"><svg width="24" height="22" viewBox="0 0 24 22"><path d="M12 3.500v16M4 1.500h6a2 2 0 0 1 2 2 2 2 0 0 1 2-2h6a2.500 2.500 0 0 1 2.500 2.500v14a2.500 2.500 0 0 1-2.500 2.500h-6a2 2 0 0 1-2-1.500 2 2 0 0 1-2 1.500H4A2.500 2.500 0 0 1 1.500 18V4A2.500 2.500 0 0 1 4 1.500z" /></svg></button>
        <button aria-label="Slide show"><svg width="24" height="22" viewBox="0 0 24 22"><path d="M3.500 2.500v10a3 3 0 0 0 3 3h11a3 3 0 0 0 3-3v-10M12 15.500v4M8 20.500h8" /><path d="M1 2h22" stroke-width="2.500" /></svg></button>
      </div>
      <div class="zoom">
        <button aria-label="Zoom out"><svg width="12" height="12" viewBox="0 0 12 12"><path d="M0 6h12" /></svg></button>
        <input type="range" min="0" max="100" value="58" aria-label="Zoom">
        <button aria-label="Zoom in"><svg width="12" height="12" viewBox="0 0 12 12"><path d="M0 6h12M6 0v12" /></svg></button>
      </div>
      <span class="percent">149%</span>
      <button aria-label="Fit to window"><svg width="20" height="20" viewBox="0 0 20 20"><path d="M7.500 7.500L1.500 1.500M1.500 6.500v-5h5M12.500 7.500l6-6M13.500 1.500h5v5M7.500 12.500l-6 6M1.500 13.500v5h5M12.500 12.500l6 6M13.500 18.500h5v-5" /></svg></button>
    </footer>

  </div>

</body>

</html>
```
FILE: styles.css
```css
* {
  box-sizing: border-box;
}

body {
  margin: 0;
  min-height: 100vh;
  padding: 125px 287px 124px 288px;
  display: flex;
  background: #eeede4;
  font-family: Inter, "Noto Sans", sans-serif;
  font-size: 16px;
  color: #1c1c1c;
}

button,
input,
select {
  font: inherit;
  color: inherit;
}

button {
  padding: 0;
  border: none;
  background: none;
}

p,
h1,
h2,
ol {
  margin: 0;
  padding: 0;
}

svg {
  display: block;
  flex: none;
}

.sprite {
  position: absolute;
  width: 0;
  height: 0;
}

.chev {
  width: 10px;
  height: 10px;
}

.icon-btn {
  display: flex;
  align-items: center;
}

.window {
  flex: 1;
  min-width: 0;
  display: flex;
  flex-direction: column;
  overflow: hidden;
  border-radius: 26px;
  background: #f5f5f5;
  box-shadow: 0 28px 60px rgba(70, 70, 50, 0.24), 0 6px 24px rgba(70, 70, 50, 0.12);
}

/* title bar */

.titlebar {
  height: 46px;
  padding-top: 4px;
  display: grid;
  grid-template-columns: 1fr auto 1fr;
  align-items: center;
}

.title-left {
  display: flex;
  align-items: center;
  padding-left: 14px;
  color: #666;
}

.lights {
  display: flex;
  gap: 12px;
}

.lights i {
  width: 19px;
  height: 19px;
  border-radius: 50%;
}

.red {
  background: #f9465c;
}

.yellow {
  background: #fcc203;
}

.green {
  background: #08cb45;
}

.autosave {
  display: flex;
  align-items: center;
  gap: 12px;
  margin-left: 37px;
  font-size: 15px;
  font-weight: 500;
}

.toggle {
  appearance: none;
  width: 38px;
  height: 20px;
  margin: 0;
  border-radius: 10px;
  background: #7d7d7d;
}

.toggle::before {
  content: "";
  display: block;
  width: 18px;
  height: 18px;
  margin: 1px;
  border-radius: 50%;
  background: #fff;
}

.home {
  margin-left: 15px;
}

.save {
  margin-left: 14px;
}

.undo {
  margin-left: 16px;
}

.undo-more {
  margin-left: 9px;
  color: #b5b5b5;
}

.redo {
  margin-left: 13px;
}

.more {
  margin-left: 15px;
}

.doc-name {
  display: flex;
  align-items: center;
  gap: 7px;
  color: #666;
}

.search {
  justify-self: end;
  display: flex;
  align-items: center;
  gap: 5px;
  margin: 3px 148px 0 0;
}

.search input {
  width: 204px;
  padding: 0;
  border: none;
  outline: none;
  background: none;
  font-weight: 600;
}

.search input::placeholder {
  color: #858585;
}

/* tabs */

.tabrow {
  height: 32px;
  display: flex;
  justify-content: space-between;
  padding: 0 13px 0 14px;
}

.tabs {
  display: flex;
  gap: 34px;
}

.tabs a {
  color: #1c1c1c;
  font-size: 17px;
  font-weight: 500;
  line-height: 29px;
  text-decoration: none;
}

.tabs .active {
  font-weight: 700;
  border-bottom: 3px solid #c02208;
}

.actions {
  display: flex;
  gap: 14px;
}

.pill {
  display: flex;
  align-items: center;
  gap: 6px;
  padding: 0 11px;
  border: 1px solid #e3e3e3;
  border-radius: 7px;
  background: #fff;
  font-weight: 500;
  font-size: 17px;
}

.share {
  border-color: #d42a06;
  background: #d42a06;
  color: #fff;
  font-weight: 600;
}

.share .chev {
  width: 14px;
  height: 14px;
}

/* ribbon */

.ribbon {
  height: 103px;
  padding: 15px 0 4px;
  display: flex;
  border-bottom: 1px solid #d2d2d2;
  font-size: 14px;
  font-weight: 500;
}

.group {
  display: flex;
  flex: none;
  align-items: flex-start;
  border-right: 2px solid #dcdcdc;
  overflow: hidden;
}

.clipboard {
  width: 184px;
  padding-left: 20px;
  gap: 9px;
}

.slides {
  width: 289px;
  padding-left: 16px;
}

.copilot {
  margin: 0 9px;
}

.font {
  width: 459px;
}

.paragraph {
  width: 438px;
}

.insert {
  width: 211px;
  padding-left: 18px;
  gap: 11px;
}

.arrange {
  width: 130px;
  padding-left: 17px;
  gap: 14px;
}

.addins {
  width: 87px;
  justify-content: center;
}

.designer {
  width: 116px;
  justify-content: center;
}

.claude {
  flex: 1;
  justify-content: center;
  border-right: none;
}

.big {
  display: flex;
  flex: none;
  flex-direction: column;
  align-items: center;
  line-height: 16px;
}

.pic {
  display: flex;
  align-items: center;
  gap: 5px;
  height: 46px;
  margin-top: -3px;
  margin-bottom: 3px;
}

.off {
  color: #a0a0a0;
}

.stack {
  display: flex;
  flex-direction: column;
  margin-top: -6px;
}

.stack button {
  height: 29px;
  display: flex;
  align-items: center;
  gap: 8px;
}

.rows {
  flex: none;
  display: flex;
  flex-direction: column;
  gap: 13px;
  padding: 1px 0 0 12px;
}

.row {
  height: 30px;
  display: flex;
  align-items: center;
}

.combo {
  appearance: none;
  width: 229px;
  height: 31px;
  margin: 0 6px 0 1px;
  border: 1px solid #ececec;
  border-radius: 3px;
  background: #fff url("data:image/svg+xml,%3Csvg xmlns='http://www.w3.org/2000/svg' viewBox='0 0 10 10'%3E%3Cpath d='M1.500 3l3.500 4 3.500-4' fill='none' stroke='%23666' stroke-width='1.800'/%3E%3C/svg%3E") no-repeat right 4px center / 10px;
}

.size {
  width: 70px;
  margin: 0 3px 0 0;
}

.tool {
  width: 35px;
  height: 30px;
  display: flex;
  align-items: center;
  justify-content: center;
  color: #a9a9a9;
  font-size: 18px;
  font-weight: 400;
}

.tool svg {
  fill: none;
  stroke: #b0b0b0;
  stroke-width: 1.5;
}

.tool .chev {
  color: #9a9a9a;
  stroke: none;
}

.tool b {
  font-weight: 600;
}

.tool em {
  font-family: "Liberation Serif", serif;
  font-size: 20px;
}

.tool s {
  font-size: 16px;
}

.tool sup,
.tool sub {
  font-size: 10px;
  line-height: 0;
}

.tool .blue {
  stroke: #aed2e6;
}

.tool .dots {
  stroke-width: 4;
}

.tool .gray {
  stroke: #bcbcbc;
  stroke-width: 2;
}

.tool .pink {
  stroke: #d9aed6;
}

.dd {
  width: 52px;
  display: grid;
  grid-template-columns: 33px 12px;
  justify-content: start;
  justify-items: center;
}

.sep {
  width: 20px;
  height: 24px;
  background: linear-gradient(#d9d9d9, #d9d9d9) no-repeat center / 1px 100%;
}

.smartart {
  margin: 0 16px 0 auto;
}

/* workspace */

.workspace {
  flex: 1;
  min-height: 0;
  display: flex;
}

.thumbs {
  flex: none;
  width: 314px;
  display: flex;
  background: #e4e2e8;
  border-right: 6px solid #fcfcfc;
}

.thumbs ol {
  width: 285px;
  padding: 9px 0 0 31px;
  display: flex;
  flex-direction: column;
  gap: 25px;
  list-style: none;
}

.thumbs li {
  display: flex;
  font-size: 17px;
  line-height: 36px;
  color: #444;
}

.thumbs li span {
  width: 23px;
}

.thumb {
  width: 204px;
  height: 115px;
  border-radius: 6px;
  box-shadow: 0 0 2px rgba(0, 0, 0, 0.35);
  font-family: Georgia, "Liberation Serif", serif;
  font-weight: 700;
  fill: #22304f;
}

.thumb .it {
  font-weight: 400;
  font-style: italic;
}

.selected {
  outline: 3px solid #c4300f;
}

.scroll {
  width: 17px;
  margin: 5px 0 4px;
  border-radius: 8px;
  background: #efedf2;
}

.scroll-thumb {
  height: 45%;
  border-radius: 8px;
  background: #7f7e81;
}

.editor {
  flex: 1;
  min-width: 0;
  display: flex;
  align-items: center;
  padding: 0 38px 0 31px;
  background: linear-gradient(#ececec, #e5e5e5 80%, #eaeaea);
}

.slide {
  flex: 1;
  aspect-ratio: 1108 / 621;
  background: #0a2444;
  color: #fff;
  font-family: Calibri, Lato, sans-serif;
  box-shadow: 0 0 2px rgba(0, 0, 0, 0.4);
}

.hero {
  height: 376px;
  margin: 131px 59px 0 48px;
  padding: 16px 0 0 18px;
  border-left: 7px solid #c9a24c;
}

.hero > h1,
.hero > p {
  margin-left: 9px;
}

.eyebrow {
  color: #c9ae60;
  font-size: 15px;
  font-weight: 700;
  line-height: 20px;
  letter-spacing: 7px;
}

.slide h1 {
  margin-top: 17px;
  font: 700 61px/64px Georgia, "Liberation Serif", serif;
}

.subtitle {
  margin-top: 7px;
  color: #d5e2f5;
  font: italic 28px/36px Georgia, "Liberation Serif", serif;
}

.preread {
  margin-top: 14px;
  color: #dbe4f2;
  font-size: 16px;
  line-height: 20px;
}

.stats {
  display: grid;
  grid-template-columns: repeat(3, 1fr);
  gap: 50px;
  margin-top: 77px;
}

.stats div {
  padding: 14px 0 0 9px;
  border-top: 1px solid #a5946a;
}

.stats strong {
  display: block;
  color: #cba54f;
  font: 700 37px/40px Georgia, "Liberation Serif", serif;
}

.stats em {
  display: block;
  margin-top: 9px;
  color: #dbe4f2;
  font-size: 11px;
  font-weight: 700;
  line-height: 16px;
}

.band {
  height: 10px;
  margin-top: 40px;
  background: #caa449;
}

.confidential {
  margin: 14px 0 0 82px;
  color: #c9ae60;
  font-size: 11px;
  font-weight: 700;
  line-height: 20px;
  letter-spacing: 5px;
}

/* claude pane */

.pane {
  flex: none;
  width: 504px;
  display: flex;
  flex-direction: column;
  border-left: 1px solid #d0d0d0;
  background: #fff;
}

.pane header {
  height: 47px;
  display: flex;
  align-items: center;
  justify-content: space-between;
  padding: 0 17px 0 18px;
  background: #fafafa;
}

.pane h2 {
  font-size: 18px;
  font-weight: 600;
}

.pane-tools {
  display: flex;
  justify-content: flex-end;
  gap: 21px;
  margin: 27px 28px 0 0;
}

.pane-tools svg {
  fill: none;
  stroke: #555;
  stroke-width: 1.5;
}

.pane-tools .solid {
  fill: #111;
  stroke: none;
}

.received {
  display: flex;
  align-items: center;
  gap: 15px;
  margin: 36px 0 0 18px;
  color: #8b8b8b;
  line-height: 20px;
}

.responding {
  display: flex;
  align-items: center;
  gap: 10px;
  margin: 20px 0 0 20px;
  color: #555;
  font-size: 15px;
}

.composer {
  margin: auto 17px 17px;
  border: 1px solid #e9e8e3;
  border-radius: 20px;
  background: #f4f3ec;
}

.context {
  height: 60px;
  display: flex;
  align-items: center;
  justify-content: space-between;
  padding: 2px 28px 0 20px;
  color: #444;
}

.box {
  padding: 18px 24px 17px 20px;
  border-radius: 19px;
  background: #fff;
}

.box input {
  display: block;
  width: 100%;
  height: 28px;
  padding: 0;
  border: none;
  outline: none;
  font-size: 18px;
}

.box input::placeholder {
  color: #808080;
}

.box-tools {
  display: flex;
  align-items: center;
  height: 30px;
  margin-top: 20px;
  padding-left: 3px;
}

.ff {
  margin-left: 22px;
}

.model {
  display: flex;
  align-items: center;
  gap: 8px;
  margin: 0 34px 0 auto;
}

.model select {
  appearance: none;
  padding: 0;
  border: none;
  background: none;
  font-size: 18px;
  color: #333;
}

/* status bar */

.status {
  height: 37px;
  padding: 0 31px;
  display: flex;
  align-items: center;
  border-top: 1px solid #cfcfcf;
  color: #727272;
}

.status button {
  display: flex;
  align-items: center;
  gap: 9px;
}

.status svg {
  fill: none;
  stroke: #707070;
  stroke-width: 1.5;
}

.count {
  margin-right: 19px;
}

.a11y {
  margin-left: 30px;
}

.notes {
  margin-left: auto;
}

.remarks {
  margin-left: 28px;
}

.views {
  display: flex;
  gap: 7px;
  margin-left: 18px;
}

.views button {
  width: 41px;
  height: 30px;
  justify-content: center;
}

.views .on {
  background: #b8b8b8;
  border-radius: 3px;
}

.zoom {
  display: flex;
  align-items: center;
  gap: 10px;
  margin-left: 12px;
}

.zoom input {
  appearance: none;
  width: 133px;
  height: 22px;
  margin: 0;
  background: linear-gradient(#a0a0a0, #a0a0a0) no-repeat center / 100% 5px;
}

.zoom input::-webkit-slider-thumb {
  appearance: none;
  width: 24px;
  height: 20px;
  border-radius: 9px;
  background: #fff;
  box-shadow: 0 0 4px rgba(0, 0, 0, 0.25);
}

.percent {
  margin: 0 29px 0 23px;
}
```
